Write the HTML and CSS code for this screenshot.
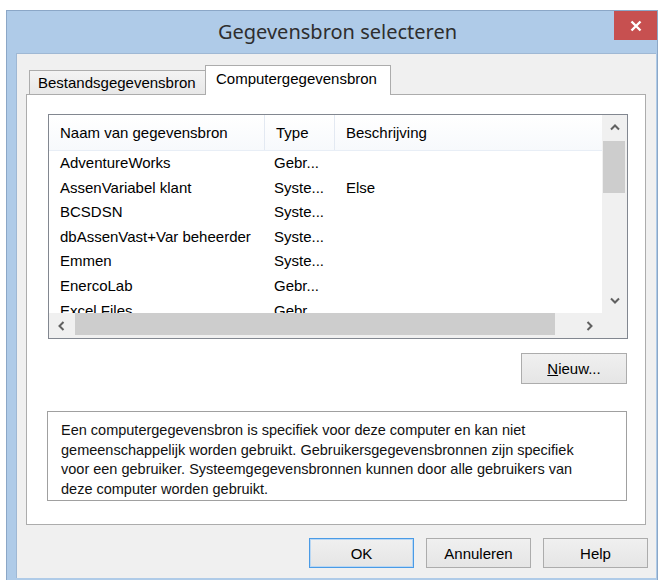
FILE: index.html
```html
<!DOCTYPE html>
<html lang="nl">
<head>
<meta charset="utf-8">
<title>Gegevensbron selecteren</title>
<link rel="stylesheet" href="styles.css">
</head>
<body>
<div class="window">
  <div class="titlebar">
    <div class="title">Gegevensbron selecteren</div>
    <div class="close">
      <svg width="12" height="12" viewBox="0 0 12 12"><path d="M1.5 1.5 L10.5 10.5 M10.5 1.5 L1.5 10.5" stroke="#fff" stroke-width="2.4" fill="none"/></svg>
    </div>
  </div>
  <div class="client">
    <div class="tabs">
      <div class="tab">Bestandsgegevensbron</div>
      <div class="tab active">Computergegevensbron</div>
    </div>
    <div class="panel">
      <div class="listview">
        <div class="lv-area">
          <div class="lv-header">
            <div class="col c1">Naam van gegevensbron</div>
            <div class="col c2">Type</div>
            <div class="col c3">Beschrijving</div>
          </div>
          <div class="lv-row"><div class="cell c1">AdventureWorks</div><div class="cell c2">Gebr...</div><div class="cell c3"></div></div>
          <div class="lv-row"><div class="cell c1">AssenVariabel klant</div><div class="cell c2">Syste...</div><div class="cell c3">Else</div></div>
          <div class="lv-row"><div class="cell c1">BCSDSN</div><div class="cell c2">Syste...</div><div class="cell c3"></div></div>
          <div class="lv-row"><div class="cell c1">dbAssenVast+Var beheerder</div><div class="cell c2">Syste...</div><div class="cell c3"></div></div>
          <div class="lv-row"><div class="cell c1">Emmen</div><div class="cell c2">Syste...</div><div class="cell c3"></div></div>
          <div class="lv-row"><div class="cell c1">EnercoLab</div><div class="cell c2">Gebr...</div><div class="cell c3"></div></div>
          <div class="lv-row"><div class="cell c1">Excel Files</div><div class="cell c2">Gebr...</div><div class="cell c3"></div></div>
        </div>
        <div class="vscroll">
          <div class="sb-btn"><svg width="10" height="7" viewBox="0 0 10 7"><polyline points="1,5.5 5,1.5 9,5.5" fill="none" stroke="#606060" stroke-width="2"/></svg></div>
          <div class="vthumb"></div>
          <div class="sb-fill"></div>
          <div class="sb-btn"><svg width="10" height="7" viewBox="0 0 10 7"><polyline points="1,1.5 5,5.5 9,1.5" fill="none" stroke="#606060" stroke-width="2"/></svg></div>
        </div>
        <div class="hscroll">
          <div class="sb-btn"><svg width="7" height="10" viewBox="0 0 7 10"><polyline points="5.5,1 1.5,5 5.5,9" fill="none" stroke="#606060" stroke-width="2"/></svg></div>
          <div class="hthumb"></div>
          <div class="sb-fill"></div>
          <div class="sb-btn"><svg width="7" height="10" viewBox="0 0 7 10"><polyline points="1.5,1 5.5,5 1.5,9" fill="none" stroke="#606060" stroke-width="2"/></svg></div>
        </div>
        <div class="corner"></div>
      </div>
      <div class="new-row">
        <button class="btn new"><u>N</u>ieuw...</button>
      </div>
      <div class="desc">Een computergegevensbron is specifiek voor deze computer en kan niet<br>gemeenschappelijk worden gebruikt. Gebruikersgegevensbronnen zijn specifiek<br>voor een gebruiker. Systeemgegevensbronnen kunnen door alle gebruikers van<br>deze computer worden gebruikt.</div>
    </div>
    <div class="actions">
      <button class="btn default">OK</button>
      <button class="btn">Annuleren</button>
      <button class="btn">Help</button>
    </div>
  </div>
</div>
</body>
</html>
```

FILE: styles.css
```css
html, body {
  margin: 0;
  padding: 0;
  background: #ffffff;
  overflow: hidden;
}

body {
  width: 658px;
  height: 580px;
  font-family: "Liberation Sans", Arial, sans-serif;
  font-size: 15px;
  color: #000;
}

/* Window frame */
.window {
  box-sizing: border-box;
  margin: 10px 0 0 6px;
  width: 652px;
  height: 570px;
  background: #afcbe8;
  border-left: 1px solid #8ba7c7;
  border-top: 1px solid #8ba7c7;
  border-right: 1px solid #8ba7c7;
  display: flex;
  flex-direction: column;
}

.titlebar {
  height: 42px;
  display: flex;
  align-items: flex-start;
  flex: none;
}

.title {
  flex: 1;
  height: 42px;
  display: flex;
  align-items: center;
  justify-content: center;
  padding-left: 54px;
  font-family: "Noto Sans", "Open Sans", sans-serif;
  font-size: 20px;
  color: #2e2e2e;
  padding-bottom: 1px;
  box-sizing: border-box;
}

.close {
  width: 43px;
  height: 29px;
  background: #c75050;
  display: flex;
  align-items: center;
  justify-content: center;
}

/* Client area */
.client {
  box-sizing: border-box;
  margin-left: 9px;
  width: 640px;
  height: 525px;
  background: #f0f0f0;
  border-left: 1px solid #9fb8d4;
  border-top: 1px solid #9fb8d4;
  display: flex;
  flex-direction: column;
}

/* Tabs */
.tabs {
  display: flex;
  align-items: flex-end;
  margin: 11px 0 0 12px;
  height: 29px;
}

.tab {
  box-sizing: border-box;
  height: 24px;
  width: 176px;
  background: linear-gradient(#f3f3f3, #e8e8e8);
  border: 1px solid #acacac;
  border-right: none;
  border-bottom: none;
  padding-left: 8px;
  line-height: 23px;
  white-space: nowrap;
}

.tab.active {
  position: relative;
  z-index: 1;
  height: 30px;
  width: 186px;
  margin-bottom: -1px;
  background: #ffffff;
  border-right: 1px solid #acacac;
  padding-left: 10px;
  line-height: 26px;
}

.panel {
  box-sizing: border-box;
  margin-left: 9px;
  width: 620px;
  height: 431px;
  background: #ffffff;
  border: 1px solid #acacac;
  padding: 19px 17px 0 21px;
}

/* List view */
.listview {
  box-sizing: border-box;
  width: 580px;
  height: 225px;
  border: 1px solid #828790;
  display: grid;
  grid-template-columns: 1fr 25px;
  grid-template-rows: 1fr 25px;
  background: #ffffff;
}

.lv-area {
  overflow: hidden;
}

.lv-header {
  display: flex;
  height: 35px;
  border-bottom: 1px solid #e8eef6;
  background: linear-gradient(#ffffff, #f7f9fc);
}

.col {
  box-sizing: border-box;
  padding-left: 11px;
  line-height: 35px;
  border-right: 1px solid #e3e9f2;
  white-space: nowrap;
}

.c1 { width: 216px; flex: none; }
.c2 { width: 70px; flex: none; }
.c3 { flex: 1; }
.col.c3 { border-right: none; }

.lv-row {
  display: flex;
  height: 24.6px;
  line-height: 24.6px;
}

.cell {
  box-sizing: border-box;
  padding-left: 11px;
  white-space: nowrap;
}

.cell.c2 { padding-left: 9px; }

.vscroll {
  background: #f0f0f0;
  display: flex;
  flex-direction: column;
}

.hscroll {
  background: #f0f0f0;
  display: flex;
}

.corner {
  background: #f0f0f0;
}

.sb-btn {
  flex: none;
  width: 25px;
  height: 25px;
  display: flex;
  align-items: center;
  justify-content: center;
}

.sb-fill { flex: 1; }

.vthumb {
  flex: none;
  height: 52px;
  margin: 1px 2px 0 1px;
  background: #cdcdcd;
}

.hthumb {
  flex: none;
  width: 480px;
  margin: 0 0 3px 1px;
  background: #cdcdcd;
}

/* Buttons */
.btn {
  box-sizing: border-box;
  width: 105px;
  height: 30px;
  font-family: "Liberation Sans", Arial, sans-serif;
  font-size: 15px;
  color: #000;
  background: linear-gradient(#f0f0f0, #e5e5e5);
  border: 1px solid #acacac;
  border-radius: 0;
  padding: 0;
}

.btn.default {
  border: 1px solid #4a9be6;
  box-shadow: inset 0 0 0 1px #b9d7f3;
}

.new-row {
  display: flex;
  justify-content: flex-end;
  margin-top: 14px;
  padding-right: 1px;
}

.btn.new {
  width: 106px;
  height: 31px;
}

.desc {
  box-sizing: border-box;
  margin: 27px 0 0 -1px;
  width: 580px;
  height: 90px;
  border: 1px solid #a0a0a0;
  padding: 9px 0 0 13px;
  font-size: 14.5px;
  line-height: 19.7px;
  white-space: nowrap;
  color: #111;
}

.actions {
  display: flex;
  justify-content: flex-end;
  gap: 12px;
  margin-top: 13px;
  padding-right: 8px;
}
```
